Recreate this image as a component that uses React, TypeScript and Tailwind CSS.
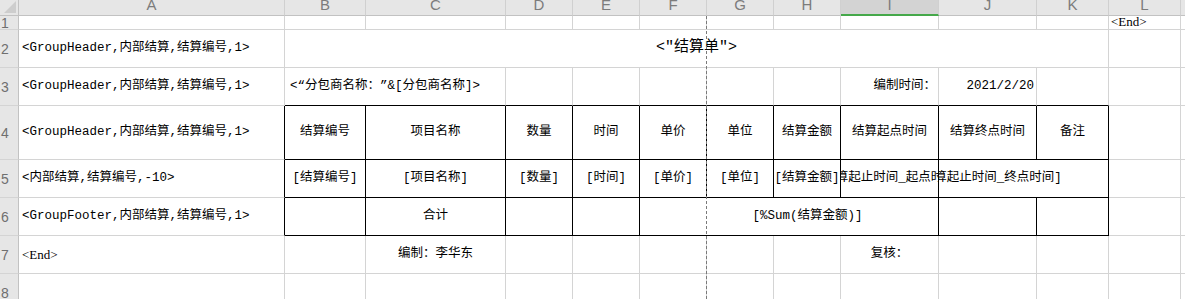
import React from 'react';

type Edge = 'g' | 'k' | 'n';
type Align = 'l' | 'c' | 'r';

const RIGHT: Record<Edge, string> = {
  g: 'border-r border-r-[#d4d4d4]',
  k: 'border-r border-r-black',
  n: '',
};
const BOTTOM: Record<Edge, string> = {
  g: 'border-b border-b-[#d4d4d4]',
  k: 'border-b border-b-black',
  n: '',
};
const ALIGN: Record<Align, string> = {
  l: 'justify-start pl-[3px]',
  c: 'justify-center',
  r: 'justify-end pr-[2px]',
};
const SPAN: Record<number, string> = {
  1: '',
  2: 'col-span-2',
  4: 'col-span-4',
  10: 'col-span-10',
};

function Cell({
  children,
  r = 'g',
  b = 'g',
  span = 1,
  align = 'c',
  className = '',
}: {
  children?: React.ReactNode;
  r?: Edge;
  b?: Edge;
  span?: number;
  align?: Align;
  className?: string;
}) {
  return (
    <div
      className={`flex items-center overflow-hidden whitespace-nowrap min-w-0 ${RIGHT[r]} ${BOTTOM[b]} ${ALIGN[align]} ${SPAN[span]} ${className}`}
    >
      {children}
    </div>
  );
}

const COLS = ['A', 'B', 'C', 'D', 'E', 'F', 'G', 'H', 'I', 'J', 'K', 'L'];

function ColHeader({ letter }: { letter: string }) {
  const selected = letter === 'I';
  return (
    <div
      className={`flex items-start justify-center overflow-hidden border-r border-r-[#d0d0d0] ${
        selected ? 'bg-[#d3d3d3] border-b-2 border-b-[#45a84a]' : 'bg-[#e6e6e6] border-b border-b-[#c2c2c2]'
      }`}
    >
      <span className="font-['Liberation_Sans',sans-serif] text-[15px] leading-[10px] text-[#7c7c7c]">{letter}</span>
    </div>
  );
}

function RowHeader({ n }: { n: number }) {
  return (
    <div className="flex items-center bg-[#e6e6e6] border-r border-r-[#c2c2c2] border-b border-b-[#d4d4d4] overflow-hidden">
      <span className="font-['Liberation_Sans',sans-serif] text-[14px] leading-none text-[#6f6f6f] pl-[1px]">{n}</span>
    </div>
  );
}

// plain empty cells for columns D..H etc.
function Blank({ count, r = 'g', b = 'g' }: { count: number; r?: Edge; b?: Edge }) {
  return (
    <>
      {Array.from({ length: count }).map((_, i) => (
        <Cell key={i} r={r} b={b} />
      ))}
    </>
  );
}

export default function App() {
  return (
    <div className="relative w-[1185px] h-[299px] overflow-hidden bg-white text-black font-['Liberation_Mono','Noto_Sans_CJK_SC',monospace] text-[12.5px] [text-spacing-trim:space-all]">
      <div className="grid grid-cols-[19px_266px_81px_140px_67px_67px_67px_67px_67px_98px_98px_72px_72px_1fr] grid-rows-[16px_14px_38px_38px_54px_38px_38px_38px_38px]">
        {/* column header */}
        <div className="relative bg-[#e6e6e6] border-r border-r-[#c2c2c2] border-b border-b-[#c2c2c2]">
          <svg width="18" height="15" viewBox="0 0 18 15" className="absolute left-0 top-0">
            <polygon points="16,1 16,13 4,13" fill="#cdcdcd" />
          </svg>
        </div>
        {COLS.map((c) => (
          <ColHeader key={c} letter={c} />
        ))}
        <div className="bg-[#e6e6e6] border-b border-b-[#c2c2c2]" />

        {/* row 1 */}
        <RowHeader n={1} />
        <Blank count={11} />
        <Cell align="l" className="items-end">
          <span className="font-['Liberation_Serif','Noto_Sans_CJK_SC',serif] text-[13px] leading-[14px] -ml-[1px]">&lt;End&gt;</span>
        </Cell>
        <Cell r="n" />

        {/* row 2 */}
        <RowHeader n={2} />
        <Cell align="l">&lt;GroupHeader,内部结算,结算编号,1&gt;</Cell>
        <Cell span={10} className="text-[15px]">&lt;"结算单"&gt;</Cell>
        <Cell />
        <Cell r="n" />

        {/* row 3 */}
        <RowHeader n={3} />
        <Cell align="l">&lt;GroupHeader,内部结算,结算编号,1&gt;</Cell>
        <Cell span={2} b="k" align="l" className="pl-[5px]">&lt;“分包商名称：”&amp;[分包商名称]&gt;</Cell>
        <Blank count={5} b="k" />
        <Cell b="k" align="r">编制时间：</Cell>
        <Cell b="k" align="r">2021/2/20</Cell>
        <Cell b="k" />
        <Cell />
        <Cell r="n" />

        {/* row 4 */}
        <RowHeader n={4} />
        <Cell align="l" r="k">&lt;GroupHeader,内部结算,结算编号,1&gt;</Cell>
        <Cell r="k" b="k">结算编号</Cell>
        <Cell r="k" b="k">项目名称</Cell>
        <Cell r="k" b="k">数量</Cell>
        <Cell r="k" b="k">时间</Cell>
        <Cell r="k" b="k">单价</Cell>
        <Cell r="k" b="k">单位</Cell>
        <Cell r="k" b="k">结算金额</Cell>
        <Cell r="k" b="k">结算起点时间</Cell>
        <Cell r="k" b="k">结算终点时间</Cell>
        <Cell r="k" b="k">备注</Cell>
        <Cell />
        <Cell r="n" />

        {/* row 5 */}
        <RowHeader n={5} />
        <Cell align="l" r="k">&lt;内部结算,结算编号,-10&gt;</Cell>
        <Cell r="k" b="k">[结算编号]</Cell>
        <Cell r="k" b="k">[项目名称]</Cell>
        <Cell r="k" b="k">[数量]</Cell>
        <Cell r="k" b="k">[时间]</Cell>
        <Cell r="k" b="k">[单价]</Cell>
        <Cell r="k" b="k">[单位]</Cell>
        <Cell r="k" b="k">[结算金额]</Cell>
        <Cell r="k" b="k">
          <span className="shrink-0">[结算起止时间_起点时间]</span>
        </Cell>
        <Cell r="k" b="k" span={2} align="l" className="!pl-0">
          <div className="w-[98px] shrink-0 flex justify-center">
            <span className="shrink-0">[结算起止时间_终点时间]</span>
          </div>
        </Cell>
        <Cell />
        <Cell r="n" />

        {/* row 6 */}
        <RowHeader n={6} />
        <Cell align="l" r="k">&lt;GroupFooter,内部结算,结算编号,1&gt;</Cell>
        <Cell r="k" b="k" />
        <Cell r="k" b="k">合计</Cell>
        <Cell r="k" b="k" />
        <Cell r="k" b="k" />
        <Cell r="k" b="k" span={4} align="l" className="!pl-0">
          {/* value sits in column H and spills into G and I */}
          <div className="ml-[134px] w-[67px] shrink-0 flex justify-center">
            <span className="shrink-0">[%Sum(结算金额)]</span>
          </div>
        </Cell>
        <Cell r="k" b="k" />
        <Cell r="k" b="k" />
        <Cell />
        <Cell r="n" />

        {/* row 7 */}
        <RowHeader n={7} />
        <Cell align="l">
          <span className="font-['Liberation_Serif','Noto_Sans_CJK_SC',serif] text-[13px]">&lt;End&gt;</span>
        </Cell>
        <Cell />
        <Cell>编制：李华东</Cell>
        <Blank count={5} />
        <Cell>复核：</Cell>
        <Blank count={3} />
        <Cell r="n" />

        {/* row 8 */}
        <RowHeader n={8} />
        <Blank count={12} />
        <Cell r="n" />
      </div>

      {/* page break marker */}
      <div className="absolute left-[706px] top-[16px] bottom-0 w-px bg-[repeating-linear-gradient(to_bottom,#7a7a7a_0_3px,transparent_3px_5px)]" />
    </div>
  );
}
